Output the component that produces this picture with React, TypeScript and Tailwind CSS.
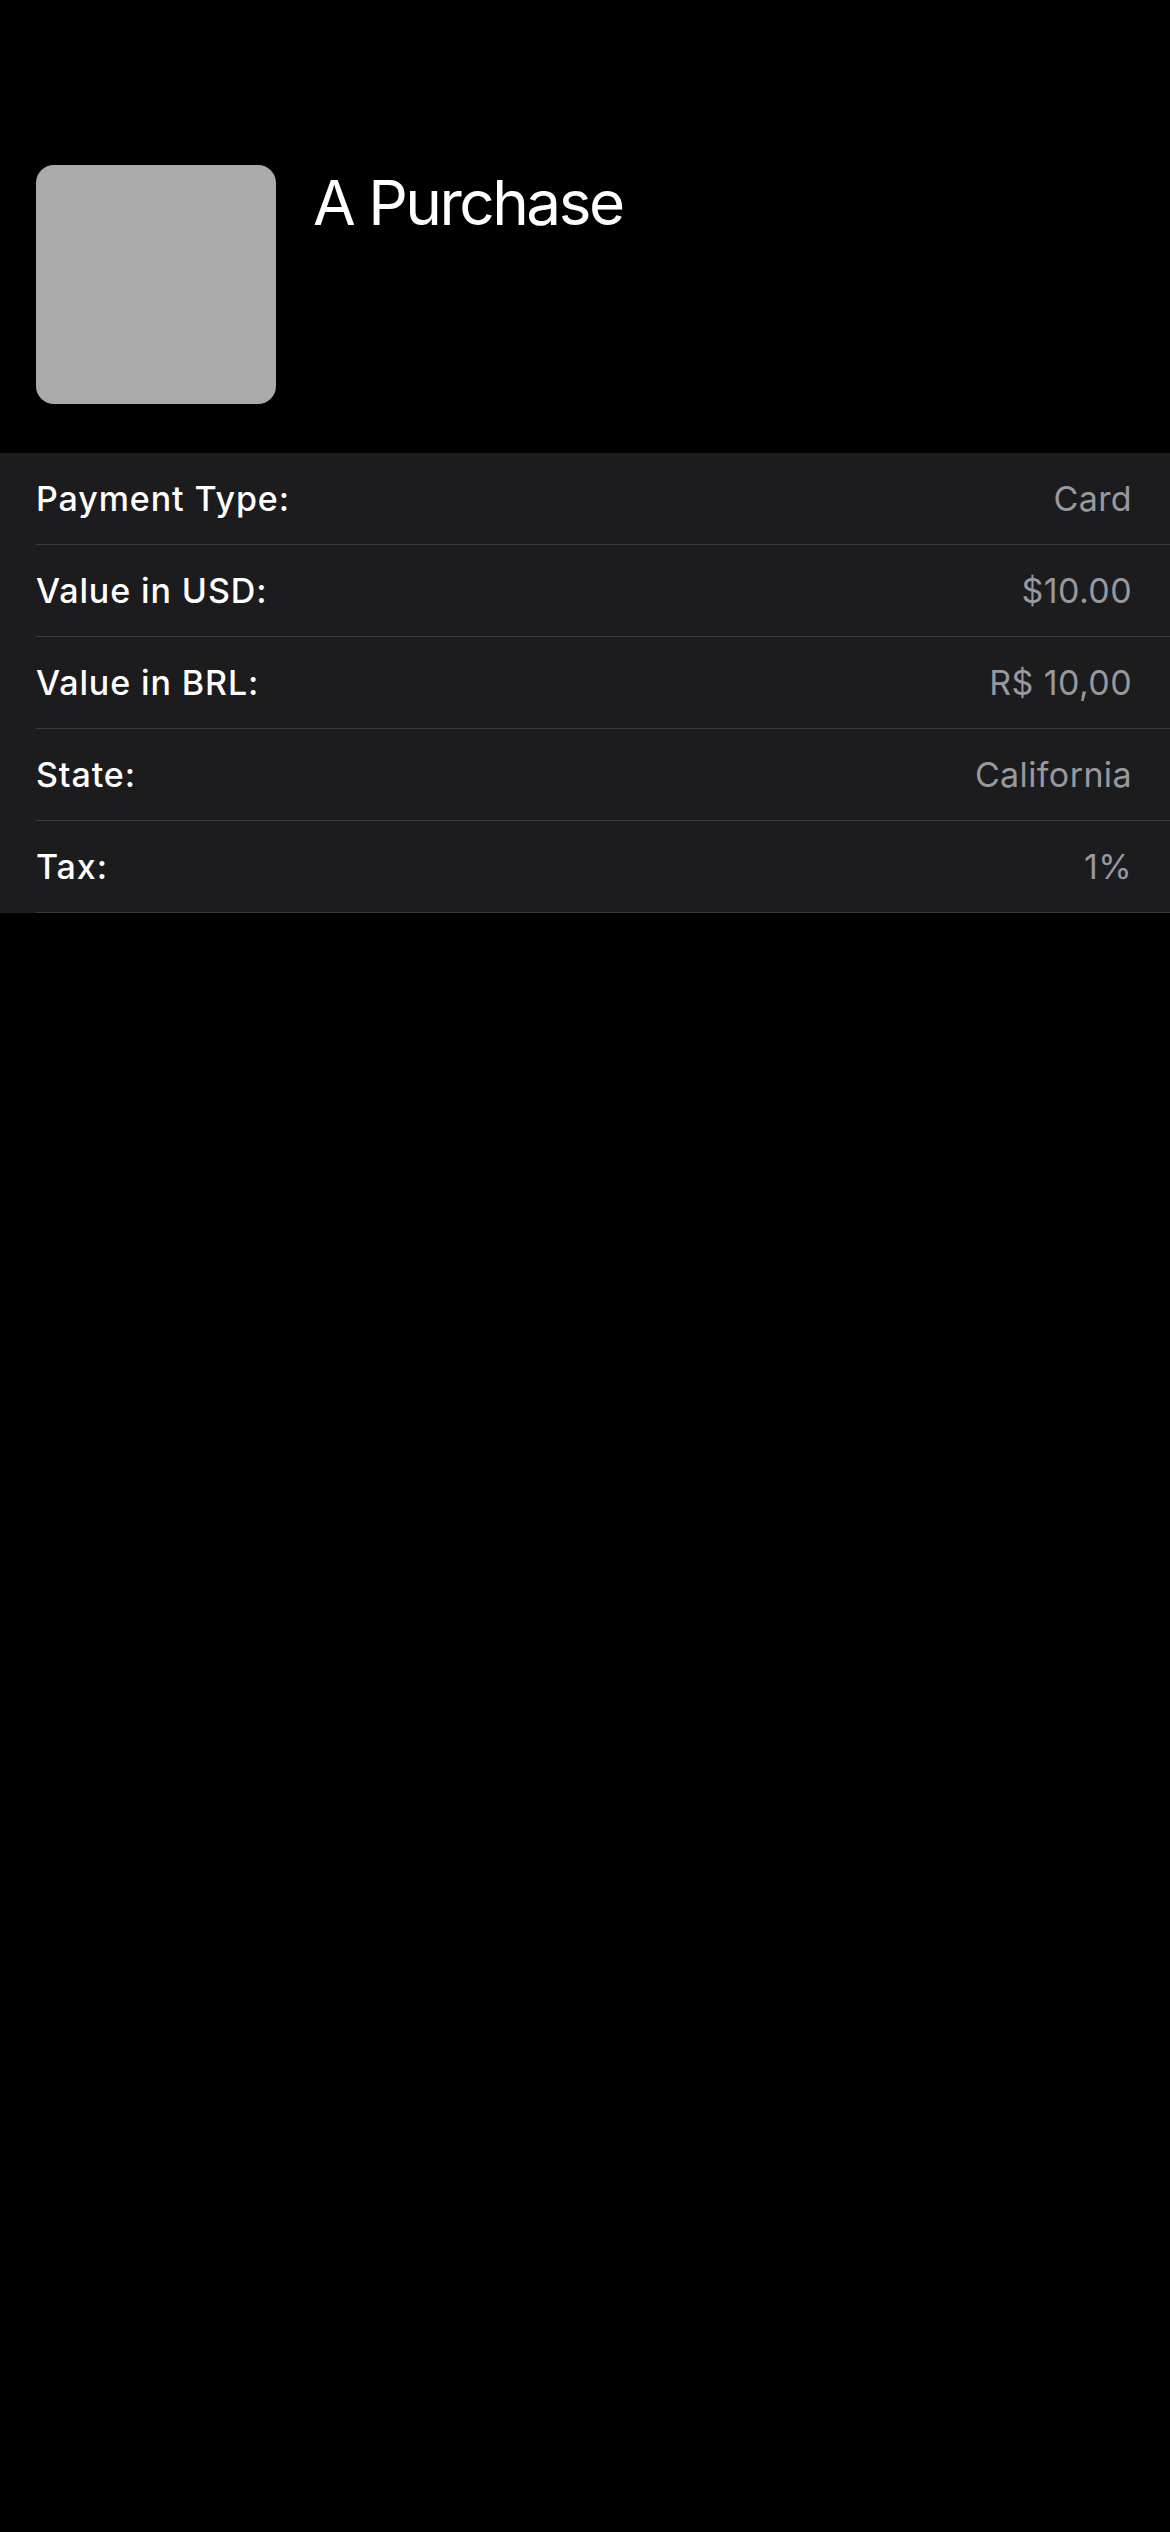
const rows = [
  { label: "Payment Type:", value: "Card" },
  { label: "Value in USD:", value: "$10.00" },
  { label: "Value in BRL:", value: "R$ 10,00" },
  { label: "State:", value: "California" },
  { label: "Tax:", value: "1%" },
];

export default function App() {
  return (
    <div className="min-h-[2532px] w-[1170px] bg-black font-['Inter','Noto_Sans',sans-serif] text-white">
      <header className="flex gap-[37px] pl-[36px] pt-[165px] pb-[49px]">
        <div className="h-[239px] w-[240px] shrink-0 rounded-[18px] bg-[#aaaaaa]" />
        <h1 className="mt-[7px] text-[62px] font-normal leading-none tracking-[-2.5px]">A Purchase</h1>
      </header>
      <section className="bg-[#1c1c1e]">
        {rows.map((row) => (
          <div key={row.label} className="ml-[36px] flex h-[92px] items-center justify-between border-b border-[#3a3a3c] pr-[38px]">
            <span className="text-[34px] font-medium tracking-[0.9px]">{row.label}</span>
            <span className="text-[34px] tracking-[0.4px] text-[#98989f]">{row.value}</span>
          </div>
        ))}
      </section>
    </div>
  );
}
